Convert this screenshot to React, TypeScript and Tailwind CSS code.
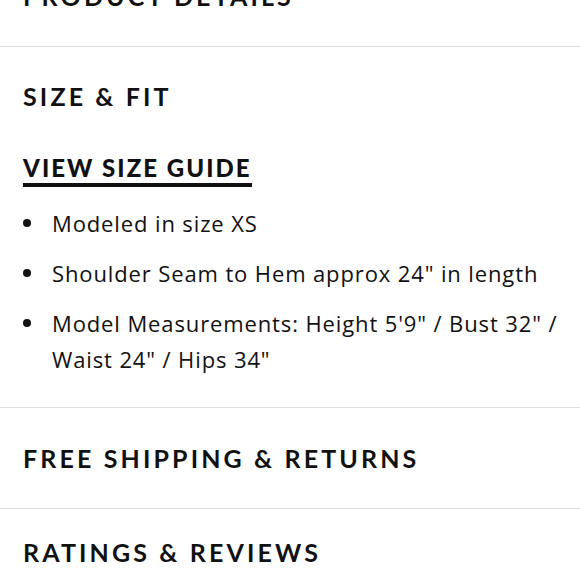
const headingFont = "font-['Lato','Liberation_Sans',sans-serif]";

function SectionHeader({ title, height = "h-[101px]" }: { title: string; height?: string }) {
  return (
    <div className={`flex ${height} items-center border-b border-[#dedede] px-[23px]`}>
      <h2 className={`${headingFont} text-[25px] leading-[30px] font-bold tracking-[0.125em] text-[#111]`}>
        {title}
      </h2>
    </div>
  );
}

const fitNotes = [
  "Modeled in size XS",
  "Shoulder Seam to Hem approx 24\" in length",
  "Model Measurements: Height 5'9\" / Bust 32\" / Waist 24\" / Hips 34\"",
];

export default function App() {
  return (
    <div className="h-[580px] w-[580px] overflow-hidden bg-white text-[#111]">
      {/* Product details is scrolled mostly out of view */}
      <div className="-mt-[54px]">
        <SectionHeader title="PRODUCT DETAILS" />
      </div>

      {/* Size & fit (expanded) */}
      <div className="border-b border-[#dedede] pt-[34px] pr-[12px] pb-[30px] pl-[23px]">
        <h2 className={`${headingFont} text-[25px] leading-[30px] font-bold tracking-[0.125em]`}>
          SIZE &amp; FIT
        </h2>
        <div className="mt-[43px]">
          <a
            href="#"
            className={`${headingFont} inline-block border-b-4 border-[#111] pb-[1px] text-[24px] leading-[28px] font-black tracking-[0.085em]`}
          >
            VIEW SIZE GUIDE
          </a>
        </div>
        <ul className="mt-[18px] flex flex-col gap-[14px] font-['Open_Sans','Liberation_Sans',sans-serif] text-[22px] leading-[36px] tracking-[0.04em]">
          {fitNotes.map((note) => (
            <li key={note} className="flex">
              <span className="flex h-[36px] w-[29px] shrink-0 items-center">
                <span className="h-[8px] w-[8px] rounded-full bg-[#111]" />
              </span>
              <span>{note}</span>
            </li>
          ))}
        </ul>
      </div>

      <SectionHeader title="FREE SHIPPING & RETURNS" />
      <SectionHeader title="RATINGS & REVIEWS" height="h-[86px]" />
    </div>
  );
}
